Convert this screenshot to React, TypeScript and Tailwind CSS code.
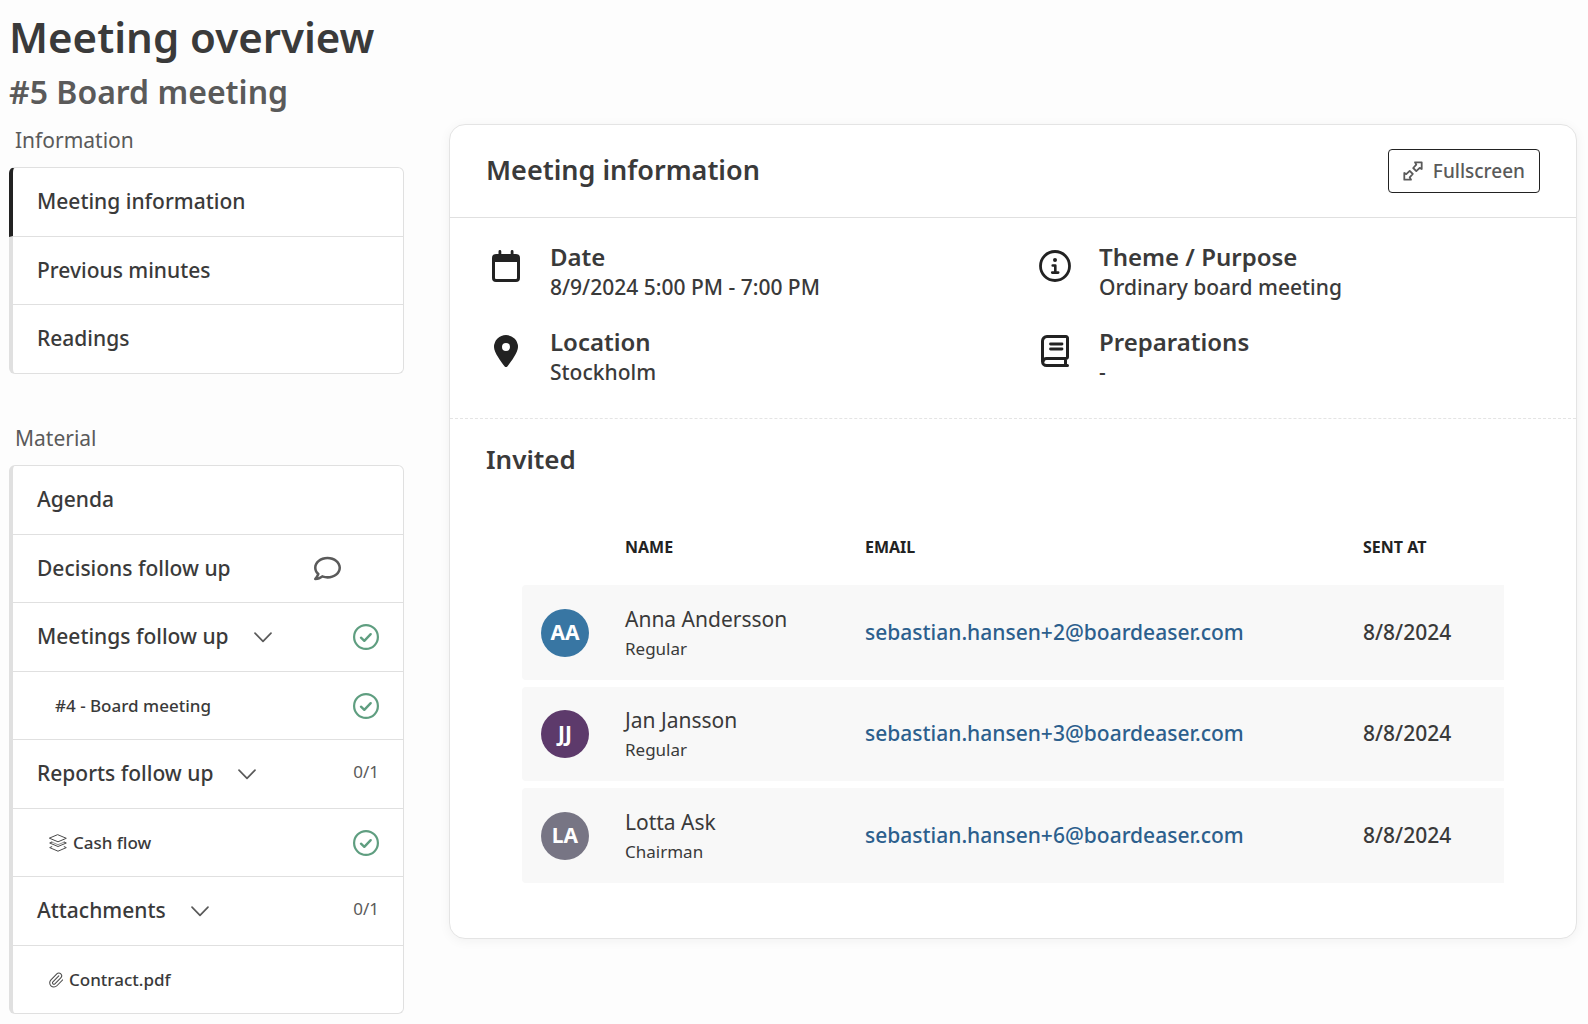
import type { ReactNode } from 'react';
import { FaRegComment } from 'react-icons/fa';
import clsx from 'clsx';

interface NavItem {
  label: string;
  active?: boolean;
  nested?: boolean;
  icon?: ReactNode;
  expandable?: boolean;
  comment?: boolean;
  status?: 'done' | string;
}

interface Invitee {
  name: string;
  role: string;
  initials: string;
  color: string;
  email: string;
  sentAt: string;
}

const informationItems: NavItem[] = [
  { label: 'Meeting information', active: true },
  { label: 'Previous minutes' },
  { label: 'Readings' },
];

const materialItems: NavItem[] = [
  { label: 'Agenda' },
  { label: 'Decisions follow up', comment: true },
  { label: 'Meetings follow up', expandable: true, status: 'done' },
  { label: '#4 - Board meeting', nested: true, status: 'done' },
  { label: 'Reports follow up', expandable: true, status: '0/1' },
  { label: 'Cash flow', nested: true, icon: <LayersIcon />, status: 'done' },
  { label: 'Attachments', expandable: true, status: '0/1' },
  { label: 'Contract.pdf', nested: true, icon: <PaperclipIcon /> },
];

const invitees: Invitee[] = [
  { name: 'Anna Andersson', role: 'Regular', initials: 'AA', color: 'bg-[#3876a3]', email: 'sebastian.hansen+2@boardeaser.com', sentAt: '8/8/2024' },
  { name: 'Jan Jansson', role: 'Regular', initials: 'JJ', color: 'bg-[#5d3a6b]', email: 'sebastian.hansen+3@boardeaser.com', sentAt: '8/8/2024' },
  { name: 'Lotta Ask', role: 'Chairman', initials: 'LA', color: 'bg-[#777584]', email: 'sebastian.hansen+6@boardeaser.com', sentAt: '8/8/2024' },
];

export default function App() {
  return (
    <div className="min-h-screen bg-[#fdfdfd] pt-[11px] pr-[11px] pb-2.5 pl-[9px] font-['Noto_Sans',sans-serif] text-[21px] text-[#3a3a3a]">
      <h1 className="text-[42px] leading-[52px] font-semibold">Meeting overview</h1>
      <p className="mt-2 text-[32px] leading-[42px] font-semibold text-[#5a5a5a]">#5 Board meeting</p>

      <div className="mt-[11px] flex items-start gap-[45px]">
        <aside className="w-[395px] shrink-0">
          <NavSection title="Information" items={informationItems} />
          <div className="h-12" />
          <NavSection title="Material" items={materialItems} />
        </aside>

        <main className="min-w-0 flex-1 rounded-2xl border border-[#e4e4e4] bg-white shadow-[0_2px_12px_rgba(0,0,0,0.05)]">
          {/* Card header */}
          <div className="flex h-[93px] items-center justify-between border-b border-[#e0e0e0] px-9">
            <h2 className="pb-0.5 text-[27px] leading-9 font-semibold">Meeting information</h2>
            <button
              type="button"
              className="flex h-11 items-center gap-2.5 rounded border border-[#222] bg-white px-3.5 text-[19px] font-medium text-[#5a5a5a]"
            >
              <ExpandIcon />
              Fullscreen
            </button>
          </div>

          {/* Details */}
          <div className="grid grid-cols-2 gap-x-11 gap-y-[25px] border-b border-dashed border-[#e4e4e4] px-9 pt-[23px] pb-8">
            <InfoField icon={<CalendarIcon />} label="Date" value="8/9/2024 5:00 PM - 7:00 PM" />
            <InfoField icon={<InfoIcon />} label="Theme / Purpose" value="Ordinary board meeting" />
            <InfoField icon={<PinIcon />} label="Location" value="Stockholm" />
            <InfoField icon={<BookIcon />} label="Preparations" value="-" />
          </div>

          {/* Invited */}
          <div className="px-9 pt-[22px] pb-12">
            <h2 className="text-[26px] leading-9 font-semibold">Invited</h2>
            <div className="mt-8 px-9">
              <table className="w-full table-fixed border-separate border-spacing-x-0 border-spacing-y-[7px] text-left">
                <colgroup>
                  <col className="w-[84px]" />
                  <col className="w-[240px]" />
                  <col />
                  <col className="w-[160px]" />
                </colgroup>
                <thead>
                  <tr className="h-[62px] text-base font-bold text-[#222]">
                    <td />
                    <th scope="col" className="px-[19px]">NAME</th>
                    <th scope="col" className="px-[19px]">EMAIL</th>
                    <th scope="col" className="px-[19px]">SENT AT</th>
                  </tr>
                </thead>
                <tbody>
                  {invitees.map(person => (
                    <InviteeRow key={person.email} person={person} />
                  ))}
                </tbody>
              </table>
            </div>
          </div>
        </main>
      </div>
    </div>
  );
}

function NavSection({ title, items }: { title: string; items: NavItem[] }) {
  return (
    <nav aria-label={title}>
      <h3 className="pl-1.5 leading-8 text-[#5a5a5a]">{title}</h3>
      <ul className="mt-[11px]">
        {items.map(item => (
          <li
            key={item.label}
            className={clsx(
              'flex items-center border-r border-b border-l-4 border-[#e0e0e0] bg-white pr-6 pl-6 odd:h-[69px] even:h-[68px]',
              'first:min-h-[70px] first:rounded-t-md first:border-t last:rounded-b-md',
              item.active && 'border-l-[#222]'
            )}
          >
            <a
              href="#"
              className={clsx(
                'flex items-center gap-1.5 font-medium',
                item.nested ? 'text-[17px]' : 'text-[21px]',
                item.nested && (item.icon ? 'pl-3' : 'pl-[18px]')
              )}
            >
              {item.icon}
              {item.label}
            </a>
            {item.expandable && (
              <button type="button" aria-label={`Toggle ${item.label}`} className="ml-6">
                <ChevronIcon />
              </button>
            )}
            <span className="ml-auto" />
            {item.comment && <FaRegComment size={27} className="mr-[38px] text-[#5a5a5a]" />}
            {item.status === 'done' && <CheckCircleIcon />}
            {item.status && item.status !== 'done' && (
              <span className="pb-1 text-[17px] text-[#5a5a5a]">{item.status}</span>
            )}
          </li>
        ))}
      </ul>
    </nav>
  );
}

function InfoField({ icon, label, value }: { icon: ReactNode; label: string; value: string }) {
  return (
    <div className="flex gap-6">
      <div className="flex w-10 justify-center pt-[9px]">{icon}</div>
      <dl>
        <dt className="text-2xl leading-8 font-semibold">{label}</dt>
        <dd className="leading-7 font-medium">{value}</dd>
      </dl>
    </div>
  );
}

function InviteeRow({ person }: { person: Invitee }) {
  return (
    <tr className="bg-[#f8f8f8] odd:h-[95px] even:h-[94px]">
      <td className="rounded-l-sm pl-[19px]">
        <div className={clsx('flex size-12 items-center justify-center rounded-full text-[21px] font-bold text-white', person.color)}>
          {person.initials}
        </div>
      </td>
      <td className="px-[19px]">
        <div className="leading-8">{person.name}</div>
        <div className="text-[17px] leading-7">{person.role}</div>
      </td>
      <td className="px-[19px]">
        <a href={`mailto:${person.email}`} className="font-medium text-[#2c5f8d]">{person.email}</a>
      </td>
      <td className="px-[19px] font-medium">{person.sentAt}</td>
    </tr>
  );
}

function ChevronIcon() {
  return (
    <svg width="20" height="20" viewBox="0 0 20 20" fill="none" stroke="#5a5a5a" strokeWidth="1.7" strokeLinecap="round" strokeLinejoin="round">
      <path d="M2 6.2l8 8.2 8-8.2" />
    </svg>
  );
}

function CheckCircleIcon() {
  return (
    <svg width="26" height="26" viewBox="0 0 26 26" fill="none" stroke="#5f9e80" strokeWidth="2.2" strokeLinecap="round" strokeLinejoin="round">
      <circle cx="13" cy="13" r="11.9" />
      <path d="M8 13.7l3.3 3.1 6.4-6.6" strokeWidth="2.4" />
    </svg>
  );
}

function LayersIcon() {
  return (
    <svg width="18" height="18" viewBox="0 0 18 18" fill="none" stroke="#4a4a4a" strokeWidth="1" strokeLinejoin="round" strokeLinecap="round">
      <path d="M9 .8L17.300 4.300 9 7.800.700 4.300z" />
      <path d="M2.800 8.100L.700 9 9 12.500 17.300 9l-2.100-.9" />
      <path d="M2.800 12.700l-2.100.9L9 17.200l8.300-3.600-2.100-.9" />
      <path d="M2.800 8.100L9 10.700l6.200-2.600" strokeWidth=".6" />
    </svg>
  );
}

function PaperclipIcon() {
  return (
    <svg width="14" height="16" viewBox="2 1 20 22" fill="none" stroke="#4a4a4a" strokeWidth="1.5" strokeLinecap="round" strokeLinejoin="round">
      <path d="m16 6-8.414 8.586a2 2 0 0 0 2.829 2.829l8.414-8.586a4 4 0 1 0-5.657-5.657l-8.379 8.551a6 6 0 1 0 8.485 8.485l8.379-8.551" />
    </svg>
  );
}

function ExpandIcon() {
  return (
    <svg width="20" height="20" viewBox="0 0 20 20" fill="none" stroke="#5a5a5a" strokeWidth="1.8" strokeLinejoin="round">
      <path d="M12 1.300h6.700V8l-2-1.100-3.400 3.200-3.100-3.100 3.100-3.400z" />
      <path d="M8 18.700H1.300V12l2 1.100 3.400-3.200 3.100 3.100-3.100 3.400z" />
    </svg>
  );
}

function CalendarIcon() {
  return (
    <svg width="28" height="32" viewBox="0 0 28 32" fill="#222">
      <path
        fillRule="evenodd"
        d="M6.500 1.400a1.400 1.400 0 0 1 2.800 0V4h9.400V1.400a1.400 1.400 0 0 1 2.800 0V4H24a4 4 0 0 1 4 4v20a4 4 0 0 1-4 4H4a4 4 0 0 1-4-4V8a4 4 0 0 1 4-4h2.500zM3 12v16a1 1 0 0 0 1 1h20a1 1 0 0 0 1-1V12z"
      />
    </svg>
  );
}

function PinIcon() {
  return (
    <svg width="24" height="32" viewBox="0 0 24 32" fill="#222">
      <path
        fillRule="evenodd"
        d="M12 0a12 12 0 0 1 12 12c0 5.500-7.300 15.100-10.500 19.200a1.900 1.900 0 0 1-3 0C7.300 27.100 0 17.500 0 12A12 12 0 0 1 12 0zm0 8a4 4 0 1 0 0 8 4 4 0 0 0 0-8z"
      />
    </svg>
  );
}

function InfoIcon() {
  return (
    <svg width="32" height="32" viewBox="0 0 32 32" fill="none" stroke="#222" strokeWidth="2.8" strokeLinecap="round" strokeLinejoin="round">
      <circle cx="16" cy="16" r="14.5" />
      <circle cx="16" cy="10" r="2" fill="#222" stroke="none" />
      <path d="M13.700 15.500H16.300V22.600M13.200 22.600h6" strokeWidth="2.6" />
    </svg>
  );
}

function BookIcon() {
  return (
    <svg width="28" height="32" viewBox="0 0 28 32" fill="none" stroke="#222" strokeWidth="3" strokeLinecap="round" strokeLinejoin="round">
      <path d="M26.500 30.500H5.500a4 4 0 0 1-4-4V6a4.500 4.500 0 0 1 4.500-4.500h19a1.500 1.500 0 0 1 1.500 1.500v19a1.500 1.500 0 0 1-1.500 1.500H5.500a3.500 3.500 0 0 0-3.500 3.500M24.500 24v6" />
      <path d="M9.500 9h11.500M9.500 14h11.500" strokeWidth="2.8" />
    </svg>
  );
}
